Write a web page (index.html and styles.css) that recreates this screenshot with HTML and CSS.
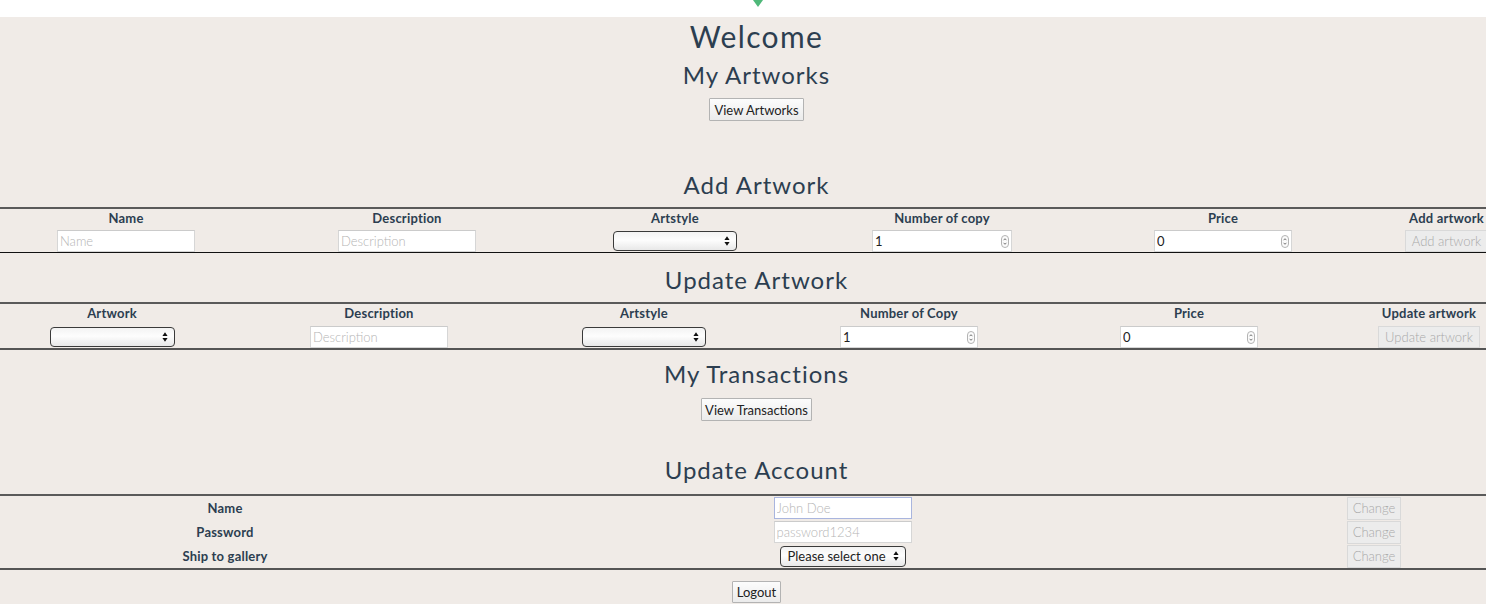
FILE: index.html
```html
<!DOCTYPE html>
<html lang="en">
<head>
<meta charset="utf-8">
<title>Dashboard</title>
<link rel="stylesheet" href="styles.css">
</head>
<body>
<div class="topbar"><span class="topbar-caret"></span></div>
<main class="app">
  <h1 class="title">Welcome</h1>
  <h2 class="heading">My Artworks</h2>
  <button class="btn">View Artworks</button>

  <h2 class="heading heading-add">Add Artwork</h2>
  <div class="form-grid add-grid">
    <div class="col-head">Name</div>
    <div class="col-head">Description</div>
    <div class="col-head">Artstyle</div>
    <div class="col-head">Number of copy</div>
    <div class="col-head">Price</div>
    <div class="col-head">Add artwork</div>

    <input class="field" type="text" placeholder="Name">
    <input class="field" type="text" placeholder="Description">
    <div class="select-box">
      <select class="select-native"><option></option></select>
      <svg class="select-arrows" viewBox="0 0 6 10" width="6" height="10"><path d="M3 0.3 L5.6 4 H0.4 Z M0.4 6 H5.6 L3 9.7 Z" fill="#111"/></svg>
    </div>
    <div class="number-box">
      <input class="number-native" type="text" value="1">
      <svg class="spinner" viewBox="0 0 8 13" width="8" height="13"><rect x="0.5" y="0.5" width="7" height="12" rx="3.5" fill="#fbfbfb" stroke="#b3b3b3"/><path d="M2.6 5.2 L4 3.7 L5.4 5.2 M2.6 7.8 L4 9.3 L5.4 7.8" fill="none" stroke="#666" stroke-width="0.9"/></svg>
    </div>
    <div class="number-box number-price">
      <input class="number-native" type="text" value="0">
      <svg class="spinner" viewBox="0 0 8 13" width="8" height="13"><rect x="0.5" y="0.5" width="7" height="12" rx="3.5" fill="#fbfbfb" stroke="#b3b3b3"/><path d="M2.6 5.2 L4 3.7 L5.4 5.2 M2.6 7.8 L4 9.3 L5.4 7.8" fill="none" stroke="#666" stroke-width="0.9"/></svg>
    </div>
    <button class="btn-disabled" disabled>Add artwork</button>
  </div>

  <h2 class="heading heading-update">Update Artwork</h2>
  <div class="form-grid update-grid">
    <div class="col-head">Artwork</div>
    <div class="col-head">Description</div>
    <div class="col-head">Artstyle</div>
    <div class="col-head">Number of Copy</div>
    <div class="col-head">Price</div>
    <div class="col-head">Update artwork</div>

    <div class="select-box select-wide">
      <select class="select-native"><option></option></select>
      <svg class="select-arrows" viewBox="0 0 6 10" width="6" height="10"><path d="M3 0.3 L5.6 4 H0.4 Z M0.4 6 H5.6 L3 9.7 Z" fill="#111"/></svg>
    </div>
    <input class="field" type="text" placeholder="Description">
    <div class="select-box">
      <select class="select-native"><option></option></select>
      <svg class="select-arrows" viewBox="0 0 6 10" width="6" height="10"><path d="M3 0.3 L5.6 4 H0.4 Z M0.4 6 H5.6 L3 9.7 Z" fill="#111"/></svg>
    </div>
    <div class="number-box number-price">
      <input class="number-native" type="text" value="1">
      <svg class="spinner" viewBox="0 0 8 13" width="8" height="13"><rect x="0.5" y="0.5" width="7" height="12" rx="3.5" fill="#fbfbfb" stroke="#b3b3b3"/><path d="M2.6 5.2 L4 3.7 L5.4 5.2 M2.6 7.8 L4 9.3 L5.4 7.8" fill="none" stroke="#666" stroke-width="0.9"/></svg>
    </div>
    <div class="number-box number-price">
      <input class="number-native" type="text" value="0">
      <svg class="spinner" viewBox="0 0 8 13" width="8" height="13"><rect x="0.5" y="0.5" width="7" height="12" rx="3.5" fill="#fbfbfb" stroke="#b3b3b3"/><path d="M2.6 5.2 L4 3.7 L5.4 5.2 M2.6 7.8 L4 9.3 L5.4 7.8" fill="none" stroke="#666" stroke-width="0.9"/></svg>
    </div>
    <button class="btn-disabled" disabled>Update artwork</button>
  </div>

  <h2 class="heading heading-tx">My Transactions</h2>
  <button class="btn btn-tx">View Transactions</button>

  <h2 class="heading heading-account">Update Account</h2>
  <div class="account-grid">
    <div class="col-head">Name</div>
    <input class="field field-focus" type="text" placeholder="John Doe">
    <button class="btn-disabled btn-change" disabled>Change</button>

    <div class="col-head">Password</div>
    <input class="field" type="password" placeholder="password1234">
    <button class="btn-disabled btn-change" disabled>Change</button>

    <div class="col-head">Ship to gallery</div>
    <div class="select-box select-gallery">
      <select class="select-native"><option>Please select one</option></select>
      <svg class="select-arrows" viewBox="0 0 6 10" width="6" height="10"><path d="M3 0.3 L5.6 4 H0.4 Z M0.4 6 H5.6 L3 9.7 Z" fill="#111"/></svg>
    </div>
    <button class="btn-disabled btn-change" disabled>Change</button>
  </div>

  <button class="btn btn-logout">Logout</button>
</main>
</body>
</html>
```
FILE: styles.css
```css
html, body {
  margin: 0;
  padding: 0;
}

body {
  background: #ffffff;
  width: 1486px;
  overflow: hidden;
  font-family: Lato, "Noto Sans", "Liberation Sans", sans-serif;
  color: #2c3e50;
}

.topbar {
  width: 1513px;
  height: 17px;
  background: #ffffff;
}

.topbar-caret {
  display: block;
  width: 10px;
  height: 7px;
  margin-left: 753px;
  background: #4fb879;
  clip-path: polygon(0 0, 100% 0, 50% 100%);
}

.app {
  width: 1513px;
  background: #f0ebe7;
  text-align: center;
  padding: 2px 0 1px;
}

.title {
  margin: 0;
  font-size: 30px;
  line-height: 34px;
  font-weight: 400;
  letter-spacing: 1.4px;
}

.heading {
  margin: 8px 0 0;
  font-size: 24px;
  line-height: 28px;
  font-weight: 400;
  letter-spacing: 1px;
}

.heading-add { margin-top: 50px; }
.heading-update { margin-top: 13px; }
.heading-tx { margin-top: 10px; }
.heading-account { margin-top: 35px; }

.btn {
  display: block;
  margin: 9px auto 0;
  height: 23px;
  padding: 0 4px;
  font-family: Lato, "Noto Sans", "Liberation Sans", sans-serif;
  font-size: 13px;
  color: #222222;
  background: linear-gradient(#fcfcfc, #ebebeb);
  border: 1px solid #b3b3b3;
  border-radius: 1px;
}

.btn-tx {
  margin-top: 10px;
  padding: 0 3px;
}

.btn-logout {
  margin-top: 11px;
  height: 22px;
}

.form-grid {
  display: grid;
  grid-template-rows: 14px 22px;
  row-gap: 5px;
  justify-items: center;
  align-items: center;
  margin-top: 8px;
  padding-top: 2px;
  border-top: 2px solid #5a5a5a;
}

.add-grid {
  grid-template-columns: 252px 310px 226px 308px 254px 193px;
  border-bottom: 1px solid #111111;
}

.update-grid {
  grid-template-columns: 224px 310px 220px 310px 250px 230px;
  row-gap: 6px;
  border-bottom: 2px solid #555555;
}

.col-head {
  font-size: 13px;
  line-height: 14px;
  font-weight: 700;
  letter-spacing: 0.2px;
  color: #2c3e50;
  white-space: nowrap;
}

.field {
  box-sizing: border-box;
  width: 138px;
  height: 22px;
  margin: 0;
  padding: 0 2px;
  border: 1px solid #d6d6d6;
  border-top-color: #cbcbcb;
  background: #ffffff;
  font-family: Lato, "Noto Sans", "Liberation Sans", sans-serif;
  font-size: 13px;
  font-weight: 300;
  color: #222222;
  outline: none;
}

.field::placeholder {
  color: #b5b5b5;
}

.field-focus {
  border-color: #a9b5de;
}

.number-box {
  box-sizing: border-box;
  display: flex;
  align-items: center;
  width: 140px;
  height: 22px;
  border: 1px solid #d6d6d6;
  border-top-color: #cbcbcb;
  background: #ffffff;
}

.number-price {
  width: 138px;
}

.number-native {
  flex: 1;
  min-width: 0;
  height: 100%;
  margin: 0;
  padding: 0 2px;
  border: 0;
  background: transparent;
  font-family: Lato, "Noto Sans", "Liberation Sans", sans-serif;
  font-size: 13px;
  color: #222222;
  outline: none;
}

.spinner {
  flex: none;
  margin-right: 2px;
}

.select-box {
  box-sizing: border-box;
  display: flex;
  align-items: center;
  width: 124px;
  height: 20px;
  border: 1px solid #3a3a3a;
  border-radius: 4px;
  background: linear-gradient(#f3f3f3, #fdfdfd 45%, #e8e8e8);
}

.select-wide {
  width: 125px;
}

.select-gallery {
  width: 126px;
  height: 21px;
}

.select-native {
  flex: 1;
  min-width: 0;
  height: 100%;
  margin: 0;
  padding: 0 0 0 7px;
  border: 0;
  background: transparent;
  appearance: none;
  -webkit-appearance: none;
  font-family: Lato, "Noto Sans", "Liberation Sans", sans-serif;
  font-size: 13px;
  color: #222222;
  outline: none;
}

.select-arrows {
  flex: none;
  margin-right: 6px;
}

.btn-disabled {
  box-sizing: border-box;
  height: 22px;
  margin: 0;
  padding: 0 6px;
  font-family: Lato, "Noto Sans", "Liberation Sans", sans-serif;
  font-size: 13px;
  font-weight: 300;
  color: #a9a9a9;
  background: #ececec;
  border: 1px solid #d9d9d9;
  white-space: nowrap;
}

.btn-change {
  height: 23px;
  padding: 0 5px;
}

.account-grid {
  display: grid;
  grid-template-columns: 450px 785px 278px;
  grid-auto-rows: 24px;
  justify-items: center;
  align-items: center;
  margin-top: 10px;
  border-top: 2px solid #5a5a5a;
  border-bottom: 2px solid #555555;
}
```
